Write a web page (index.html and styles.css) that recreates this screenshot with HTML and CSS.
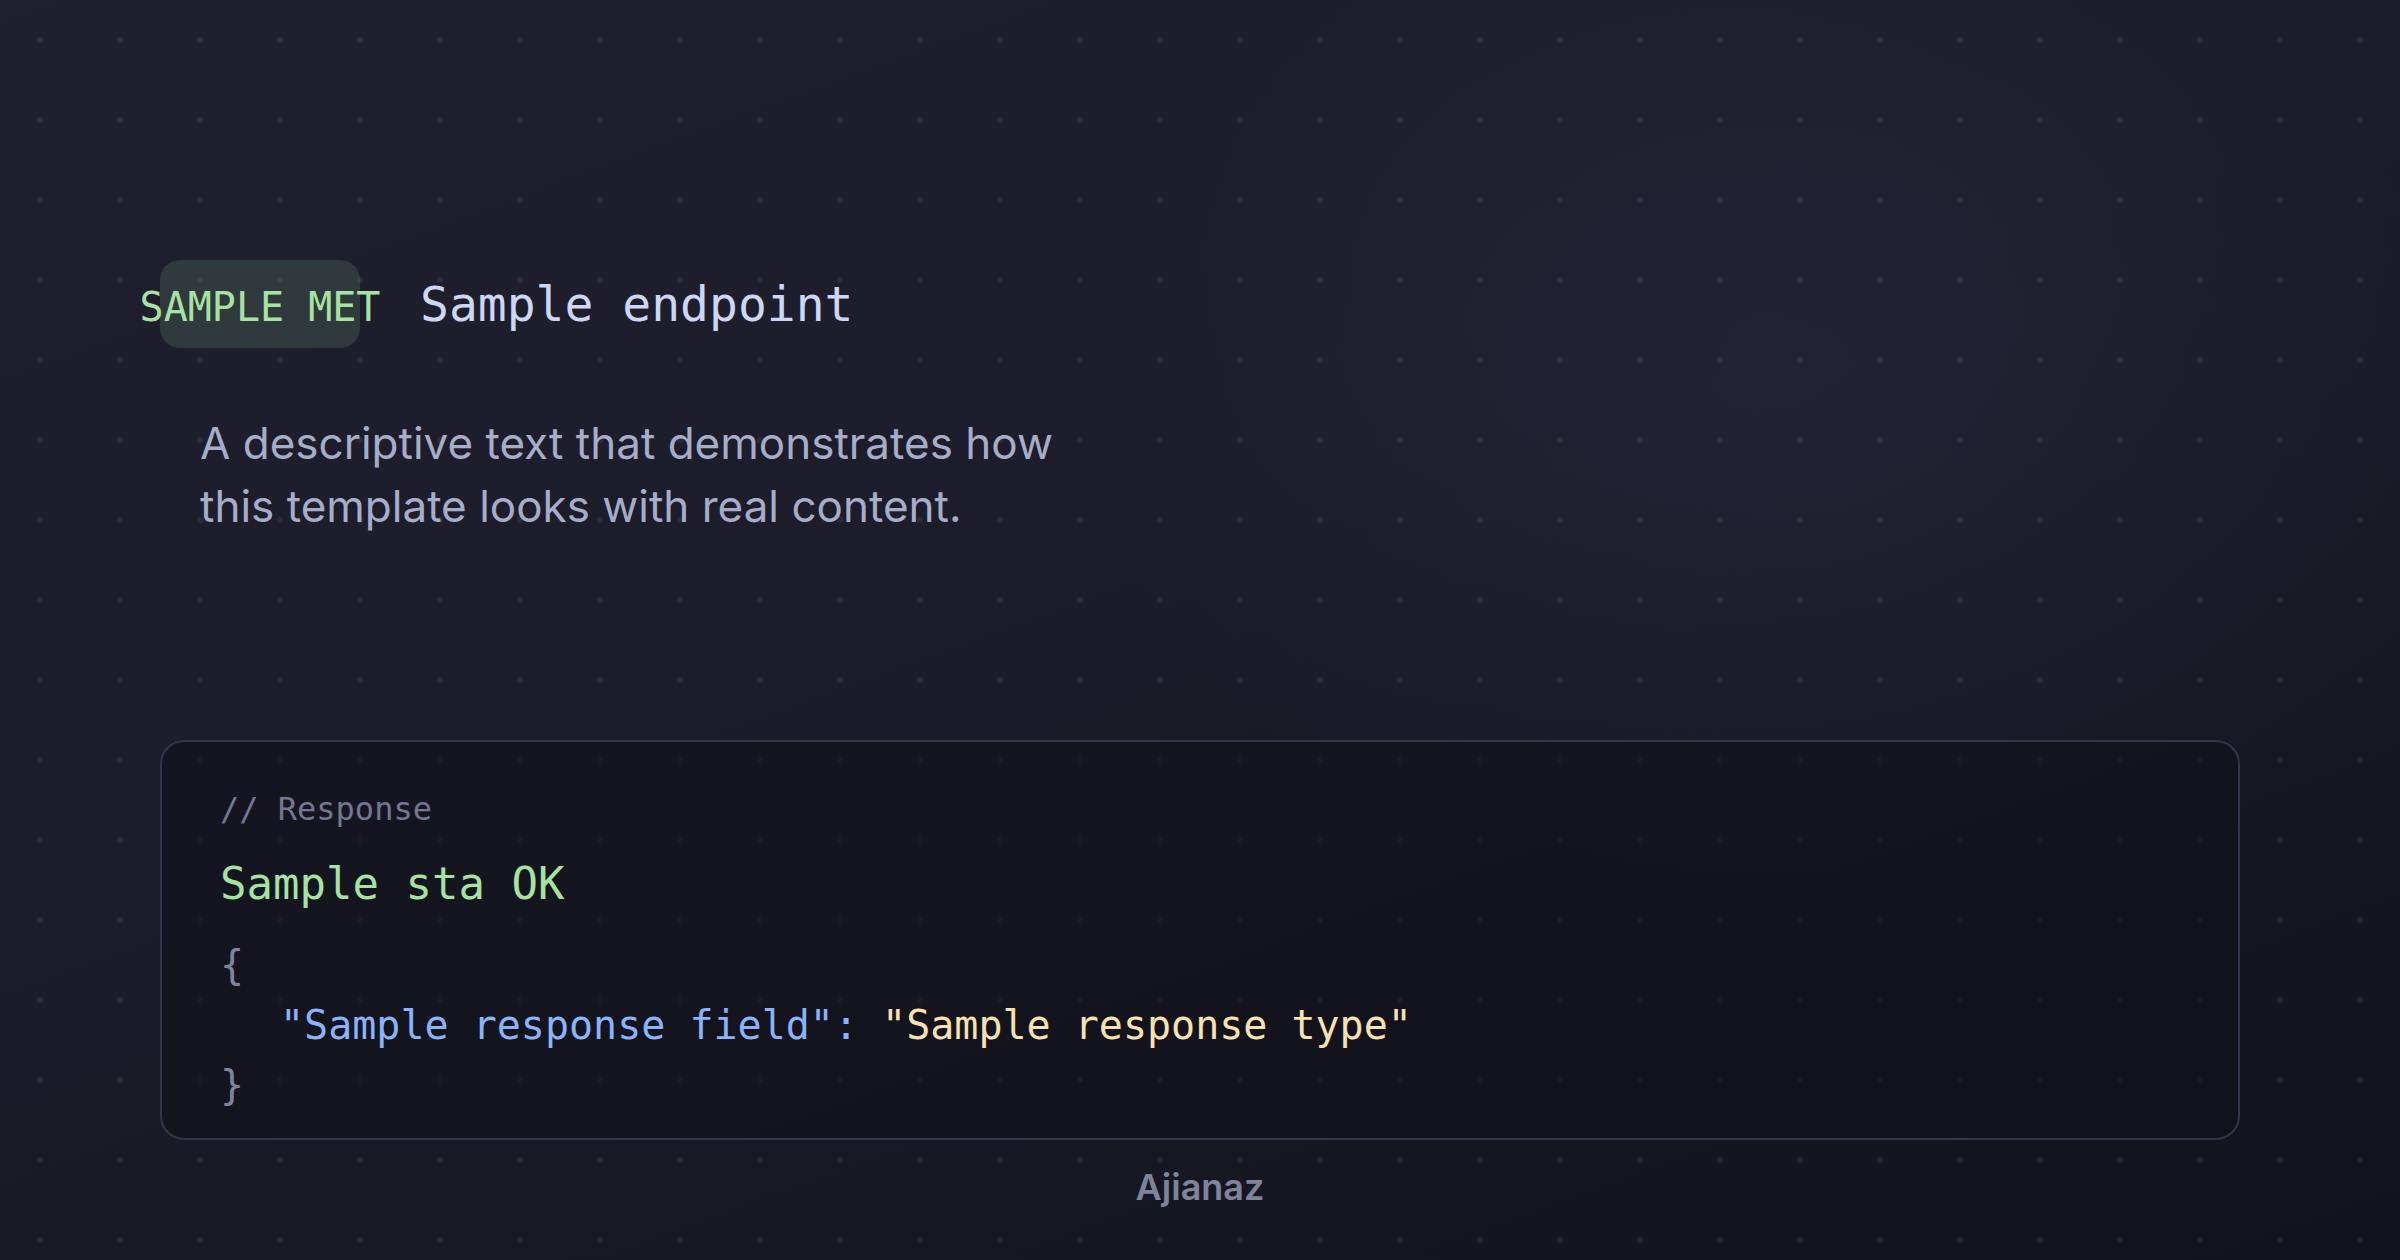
FILE: index.html
```html
<!DOCTYPE html>
<html lang="en">
<head>
<meta charset="utf-8">
<title>Sample endpoint</title>
<link rel="stylesheet" href="styles.css">
</head>
<body>
  <main class="page">
    <section class="endpoint">
      <header class="endpoint-head">
        <span class="method">SAMPLE MET</span>
        <h1 class="path">Sample endpoint</h1>
      </header>
      <p class="desc">A descriptive text that demonstrates how this template looks with real content.</p>
    </section>
    <section class="response">
      <div class="comment">// Response</div>
      <div class="status">Sample sta OK</div>
      <div class="json">
        <div class="brace">{</div>
        <div class="field"><span class="key">"Sample response field":</span> <span class="val">"Sample response type"</span></div>
        <div class="brace">}</div>
      </div>
    </section>
    <footer class="credit">Ajianaz</footer>
  </main>
</body>
</html>
```

FILE: styles.css
```css
html, body {
  margin: 0;
  padding: 0;
}

body {
  width: 2400px;
  height: 1260px;
  overflow: hidden;
  background:
    radial-gradient(circle at center, rgba(255, 255, 255, 0.06) 0, rgba(255, 255, 255, 0.06) 3px, transparent 3.6px) 0 0 / 80px 80px,
    radial-gradient(ellipse 950px 700px at 1790px 380px, rgba(52, 48, 78, 0.35), rgba(52, 48, 78, 0) 75%),
    linear-gradient(160deg, #1f1f2e 0%, #1c1c2a 45%, #13131c 100%);
  font-family: "Inter", "Liberation Sans", sans-serif;
}

.page {
  box-sizing: border-box;
  height: 1260px;
  padding: 260px 160px 0;
  display: flex;
  flex-direction: column;
}

.endpoint-head {
  display: flex;
  align-items: center;
  gap: 60px;
  height: 88px;
}

.method {
  flex: 0 0 auto;
  box-sizing: border-box;
  width: 200px;
  height: 88px;
  padding-top: 6px;
  border-radius: 20px;
  background: rgba(166, 227, 161, 0.14);
  display: flex;
  align-items: center;
  justify-content: center;
  white-space: nowrap;
  font-family: "DejaVu Sans Mono", monospace;
  font-size: 40px;
  color: #a6e3a1;
}

.path {
  margin: 0;
  font-family: "DejaVu Sans Mono", monospace;
  font-size: 48px;
  font-weight: 400;
  color: #cdd6f4;
  white-space: nowrap;
}

.desc {
  margin: 64px 0 0 40px;
  max-width: 880px;
  font-family: "Inter", sans-serif;
  font-size: 44px;
  line-height: 63px;
  color: #a6adc8;
}

.response {
  margin-top: 202px;
  box-sizing: border-box;
  height: 400px;
  padding: 43px 60px 22px 58px;
  border: 2px solid #35354a;
  border-radius: 24px;
  background: rgba(16, 16, 25, 0.55);
  font-family: "DejaVu Sans Mono", monospace;
}

.comment {
  font-size: 32px;
  line-height: 48px;
  color: #737791;
}

.status {
  margin-top: 18px;
  font-size: 44px;
  line-height: 66px;
  color: #a6e3a1;
}

.json {
  margin-top: 18px;
  font-size: 40px;
  line-height: 60px;
  white-space: nowrap;
}

.brace {
  color: #7f849c;
}

.field {
  padding-left: 60px;
  white-space: pre;
}

.key {
  color: #89b4fa;
}

.val {
  color: #f9e2af;
}

.credit {
  margin-top: 25px;
  text-align: center;
  font-family: "Inter", sans-serif;
  font-size: 36px;
  font-weight: 600;
  color: #7f849c;
}
```
